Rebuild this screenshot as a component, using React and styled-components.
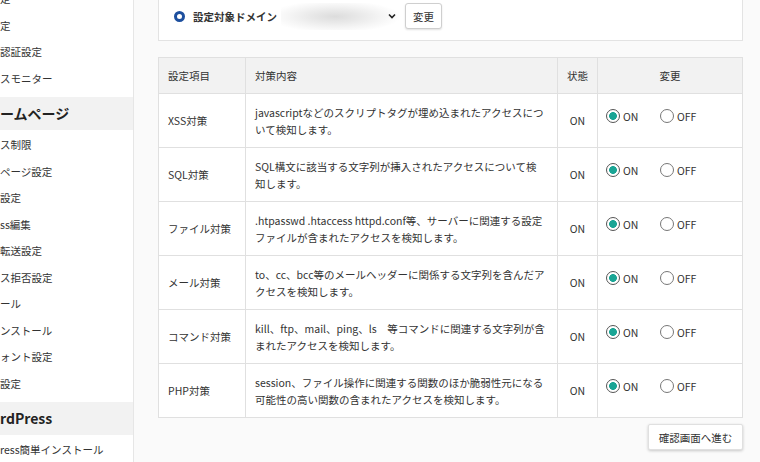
import React from 'react'
import styled, { createGlobalStyle } from 'styled-components'

const GlobalStyle = createGlobalStyle`
  html, body {
    margin: 0;
    padding: 0;
    background: #fafafa;
  }
  body {
    font-family: "Noto Sans CJK JP", "Noto Sans", sans-serif;
    color: #333;
    overflow: hidden;
  }
`

const menuTop = ['定', '定', '認証設定', 'スモニター']
const menuHome = ['ス制限', 'ページ設定', '設定', 'ss編集', '転送設定', 'ス拒否設定', 'ール', 'ンストール', 'ォント設定', '設定']
const menuWp = ['ress簡単インストール']

const rules = [
  { name: 'XSS対策', lines: ['javascriptなどのスクリプトタグが埋め込まれたアクセスにつ', 'いて検知します。'] },
  { name: 'SQL対策', lines: ['SQL構文に該当する文字列が挿入されたアクセスについて検', '知します。'] },
  { name: 'ファイル対策', lines: ['.htpasswd .htaccess httpd.conf等、サーバーに関連する設定', 'ファイルが含まれたアクセスを検知します。'] },
  { name: 'メール対策', lines: ['to、cc、bcc等のメールヘッダーに関係する文字列を含んだア', 'クセスを検知します。'] },
  { name: 'コマンド対策', lines: ['kill、ftp、mail、ping、ls　等コマンドに関連する文字列が含', 'まれたアクセスを検知します。'] },
  { name: 'PHP対策', lines: ['session、ファイル操作に関連する関数のほか脆弱性元になる', '可能性の高い関数の含まれたアクセスを検知します。'] },
]

const Radio = ({ checked, label }) => (
  <Option>
    <RadioDot $checked={checked} />
    <span>{label}</span>
  </Option>
)

const App = () => {
  return (
    <Page>
      <GlobalStyle />
      <Sidebar>
        <MenuList>
          {menuTop.map((m, i) => <MenuItem key={'t' + i}>{m}</MenuItem>)}
          <MenuHeader>ームページ</MenuHeader>
          {menuHome.map((m, i) => <MenuItem key={'h' + i}>{m}</MenuItem>)}
          <MenuHeader>rdPress</MenuHeader>
          {menuWp.map((m, i) => <MenuItem key={'w' + i}>{m}</MenuItem>)}
        </MenuList>
      </Sidebar>

      <Main>
        {/* domain selector */}
        <DomainPanel>
          <Ring />
          <DomainLabel>設定対象ドメイン</DomainLabel>
          <FakeSelect>
            <Chevron viewBox="0 0 10 10">
              <path d="M2 3.5 L5 6.5 L8 3.5" fill="none" stroke="#222" strokeWidth="1.6" />
            </Chevron>
          </FakeSelect>
          <SmallButton>変更</SmallButton>
        </DomainPanel>

        {/* waf table */}
        <Table>
          <colgroup>
            <col style={{ width: 87 }} />
            <col style={{ width: 312 }} />
            <col style={{ width: 40 }} />
            <col style={{ width: 145 }} />
          </colgroup>
          <thead>
            <tr>
              <Th>設定項目</Th>
              <Th>対策内容</Th>
              <Th $center>状態</Th>
              <Th $center>変更</Th>
            </tr>
          </thead>
          <tbody>
            {rules.map((r) => (
              <tr key={r.name}>
                <Td>{r.name}</Td>
                <Td>
                  {r.lines.map((l, i) => <Line key={i}>{l}</Line>)}
                </Td>
                <Td $center>ON</Td>
                <ChangeCell>
                  <Radio checked label="ON" />
                  <Radio label="OFF" />
                </ChangeCell>
              </tr>
            ))}
          </tbody>
        </Table>

        <Footer>
          <ConfirmButton>確認画面へ進む</ConfirmButton>
        </Footer>
      </Main>
    </Page>
  )
}

const Page = styled.div`
  display: flex;
  width: 760px;
  height: 462px;
  overflow: hidden;
`

const Sidebar = styled.aside`
  width: 133px;
  flex-shrink: 0;
  background: #fff;
  border-right: 1px solid #e6e6e6;
  overflow: hidden;
`

const MenuList = styled.div`
  display: flex;
  flex-direction: column;
  margin-top: -14px;
`

const MenuItem = styled.div`
  height: 26.5px;
  line-height: 26.5px;
  font-size: 10.5px;
  white-space: nowrap;
  color: #333;
`

const MenuHeader = styled.div`
  height: 33px;
  line-height: 33px;
  margin: 5px 0 2px;
  background: #f2f2f2;
  font-size: 14px;
  font-weight: bold;
  color: #222;
  white-space: nowrap;
`

const Main = styled.main`
  flex: 1;
  padding: 0 18px 0 24px;
  display: flex;
  flex-direction: column;
`

const DomainPanel = styled.div`
  height: 32px;
  padding: 0 0 8px 15px;
  display: flex;
  align-items: center;
  background: #fff;
  border: 1px solid #e3e3e3;
  border-top: none;
`

const Ring = styled.span`
  width: 11px;
  height: 11px;
  box-sizing: border-box;
  border: 3px solid #1d4f9e;
  border-radius: 50%;
  margin-right: 8px;
`

const DomainLabel = styled.span`
  font-size: 10.5px;
  font-weight: bold;
  margin-right: 4px;
  color: #333;
`

const FakeSelect = styled.div`
  width: 120px;
  height: 27px;
  margin-right: 4px;
  background: radial-gradient(ellipse 55% 60% at 45% 50%, #dcdcdc 0%, #e8e8e8 35%, #f5f5f5 70%, #fff 100%);
  border-radius: 2px;
  display: flex;
  align-items: center;
  justify-content: flex-end;
`

const Chevron = styled.svg`
  width: 10px;
  height: 10px;
  margin-right: 4px;
`

const SmallButton = styled.button`
  width: 37px;
  height: 26px;
  padding: 0;
  font-family: inherit;
  font-size: 10.5px;
  color: #333;
  background: #fff;
  border: 1px solid #cfcfcf;
  border-radius: 3px;
  box-shadow: 0 1px 2px rgba(0, 0, 0, 0.12);
`

const Table = styled.table`
  margin-top: 16px;
  width: 584px;
  table-layout: fixed;
  border-collapse: collapse;
  background: #fff;
  font-size: 10.5px;
`

const Th = styled.th`
  height: 35px;
  padding: 0 9px;
  background: #f2f2f2;
  border: 1px solid #e0e0e0;
  font-weight: normal;
  text-align: ${({ $center }) => ($center ? 'center' : 'left')};
  color: #333;
`

const Td = styled.td`
  height: 53px;
  padding: 0 9px;
  border: 1px solid #e0e0e0;
  vertical-align: middle;
  text-align: ${({ $center }) => ($center ? 'center' : 'left')};
  color: #333;
  white-space: nowrap;
  overflow: hidden;
`

const Line = styled.div`
  line-height: 17px;
`

const ChangeCell = styled.td`
  height: 53px;
  padding: 0 0 6px 8px;
  box-sizing: border-box;
  border: 1px solid #e0e0e0;
  vertical-align: middle;
  white-space: nowrap;
`

const Option = styled.label`
  display: inline-flex;
  align-items: center;
  width: 54px;
  gap: 3px;
  font-size: 10.5px;
  color: #333;
`

const RadioDot = styled.span`
  width: 14px;
  height: 14px;
  box-sizing: border-box;
  border-radius: 50%;
  border: 1px solid ${({ $checked }) => ($checked ? '#555' : '#777')};
  background: ${({ $checked }) =>
    $checked ? 'radial-gradient(circle, #1aa595 0 3.6px, #fff 4.2px)' : '#fff'};
`

const Footer = styled.div`
  display: flex;
  justify-content: flex-end;
  margin-top: 6px;
`

const ConfirmButton = styled.button`
  width: 95px;
  height: 26px;
  padding: 0;
  font-family: inherit;
  font-size: 10.5px;
  color: #333;
  background: #fff;
  border: 1px solid #e0e0e0;
  border-radius: 2px;
  box-shadow: 0 1px 3px rgba(0, 0, 0, 0.2);
`

export default App
